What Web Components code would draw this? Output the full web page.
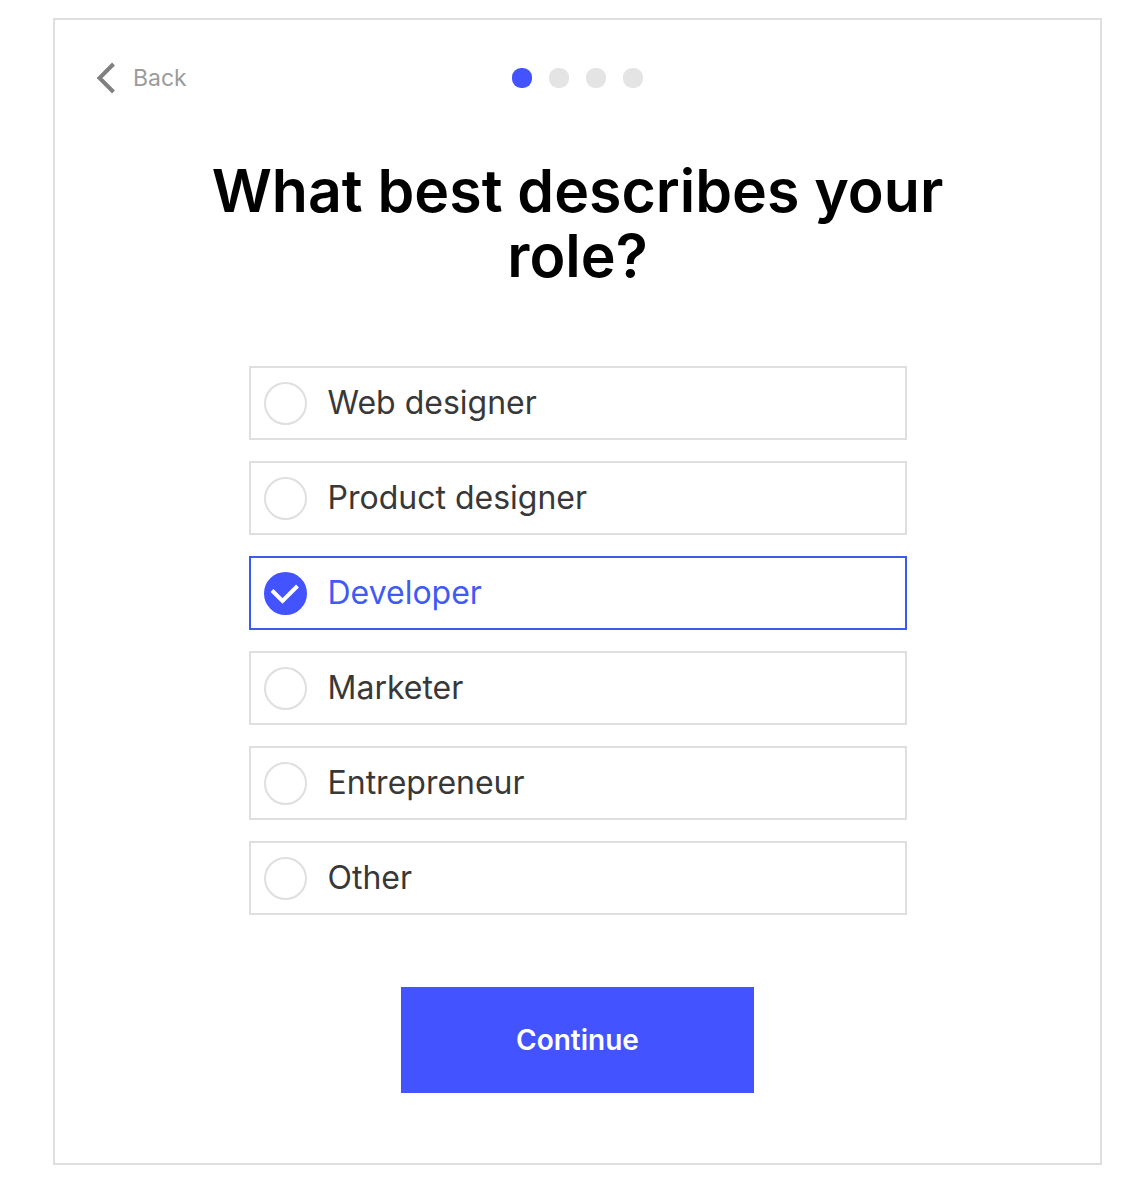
<!DOCTYPE html>
<html lang="en">
<head>
	<meta charset="utf-8">
	<title>What best describes your role?</title>
	<meta name="viewport" content="width=device-width">
<style type="text/css">
body {
	margin:0;
	padding:18px 30px 35px 53px;
	background-color:white;
	font-family:Inter, 'Liberation Sans', sans-serif;
	--accent:#4353ff;
	--line:#dfdfdf;
}
</style>
</head>
<body>

<onboarding-card>
	<back-button slot="back">Back</back-button>
	<step-dots slot="steps" total="4" current="1"></step-dots>
	<span slot="title">What best describes your role?</span>
	<choice-list label="Role" name="role" options="Web designer|Product designer|Developer|Marketer|Entrepreneur|Other" value="Developer"></choice-list>
	<primary-button slot="action">Continue</primary-button>
</onboarding-card>

<script type="text/javascript">

	customElements.define('onboarding-card', class extends HTMLElement{
	constructor() {
		super();
		this.attachShadow({mode:'open'}).innerHTML=`
		<style>
		:host {
			display:block;
			box-sizing:border-box;
			border:2px solid var(--line);
			padding:40px 40px 70px;
		}
		header {
			display:grid;
			grid-template-columns:1fr auto 1fr;
			align-items:center;
		}
		h1 {
			max-width:800px;
			margin:62px auto 78px;
			font-size:59px;
			line-height:65px;
			font-weight:600;
			text-align:center;
			color:black;
		}
		main {
			max-width:658px;
			margin:0 auto;
		}
		footer {
			display:flex;
			justify-content:center;
			margin-top:72px;
		}
		@media all and (max-width:767px){
			:host {
				padding:24px;
			}
			h1 {
				margin:40px auto;
				font-size:36px;
				line-height:40px;
			}
		}
		</style>
		<header>
			<slot name="back"></slot>
			<slot name="steps"></slot>
		</header>
		<h1><slot name="title"></slot></h1>
		<main><slot></slot></main>
		<footer><slot name="action"></slot></footer>
		`
		}
	})

	customElements.define('back-button', class extends HTMLElement{
	constructor() {
		super();
		this.attachShadow({mode:'open'}).innerHTML=`
		<style>
		:host {
			display:flex;
		}
		button {
			display:flex;
			align-items:center;
			gap:18px;
			padding:0;
			border:0;
			background:none;
			font-family:inherit;
			font-size:23px;
			line-height:36px;
			color:#9b9b9b;
			cursor:pointer;
		}
		svg {
			width:20px;
			height:32px;
		}
		</style>
		<button type="button">
			<svg viewBox="0 0 20 32" fill="none" stroke="#808080" stroke-width="4" aria-hidden="true"><path d="M18.5 2 4.5 16l14 14"/></svg>
			<slot></slot>
		</button>
		`
		}
	})

	customElements.define('step-dots', class extends HTMLElement{
	connectedCallback() {
		let total = Number(this.getAttribute('total')),
			current = Number(this.getAttribute('current')),
			dots = ''
		for (let i = 1; i <= total; i++) {
			dots += i === current ? "<li class='on' aria-current='step'></li>" : "<li></li>"
		}
		this.attachShadow({mode:'open'}).innerHTML=`
		<style>
		:host {
			display:block;
		}
		ol {
			display:flex;
			gap:17px;
			margin:0;
			padding:0;
			list-style:none;
		}
		li {
			width:20px;
			height:20px;
			border-radius:9px;
			background-color:#e4e4e4;
		}
		.on {
			background-color:var(--accent);
		}
		</style>
		<ol>${dots}</ol>
		`
		}
	})

	// all radios share one shadow root, so the browser groups them by name
	customElements.define('choice-list', class extends HTMLElement{
	connectedCallback() {
		let name = this.getAttribute('name'),
			value = this.getAttribute('value'),
			rows = this.getAttribute('options').split('|').map(function(item){
				return `<label><input type="radio" name="${name}" value="${item}"${item === value ? ' checked' : ''}><svg viewBox="0 0 43 43" aria-hidden="true"><circle cx="21.5" cy="21.5" r="20.5"/><path d="M8 18.5 18.5 29 33.5 14"/></svg><span>${item}</span></label>`
			}).join('')
		this.attachShadow({mode:'open'}).innerHTML=`
		<style>
		:host {
			display:block;
		}
		fieldset {
			display:grid;
			gap:21px;
			min-width:0;
			margin:0;
			padding:0;
			border:0;
		}
		label {
			display:grid;
			grid-template-columns:43px 1fr;
			align-items:center;
			gap:21px;
			padding:13px;
			border:2px solid var(--line);
			font-size:32px;
			line-height:44px;
			color:#383838;
			cursor:pointer;
		}
		input, svg {
			grid-area:1 / 1;
			width:43px;
			height:43px;
			margin:0;
		}
		input {
			appearance:none;
			border-radius:50%;
			cursor:pointer;
		}
		svg {
			fill:none;
			stroke:var(--line);
			stroke-width:2;
			pointer-events:none;
		}
		path {
			display:none;
			stroke:white;
			stroke-width:4;
		}
		label:has(:checked) {
			border-color:#3c5af0;
			color:#3f5bf6;
		}
		:checked + svg circle {
			fill:var(--accent);
			stroke:var(--accent);
		}
		:checked + svg path {
			display:inline;
		}
		</style>
		<fieldset aria-label="${this.getAttribute('label')}">${rows}</fieldset>
		`
		}
	})

	customElements.define('primary-button', class extends HTMLElement{
	constructor() {
		super();
		this.attachShadow({mode:'open'}).innerHTML=`
		<style>
		:host {
			display:block;
		}
		button {
			min-width:353px;
			padding:35px 24px;
			border:0;
			background-color:var(--accent);
			font-family:inherit;
			font-size:28px;
			line-height:36px;
			font-weight:600;
			color:white;
			cursor:pointer;
		}
		@media all and (max-width:767px){
			button {
				min-width:200px;
			}
		}
		</style>
		<button type="button"><slot></slot></button>
		`
		}
	})

</script>
</body>
</html>
